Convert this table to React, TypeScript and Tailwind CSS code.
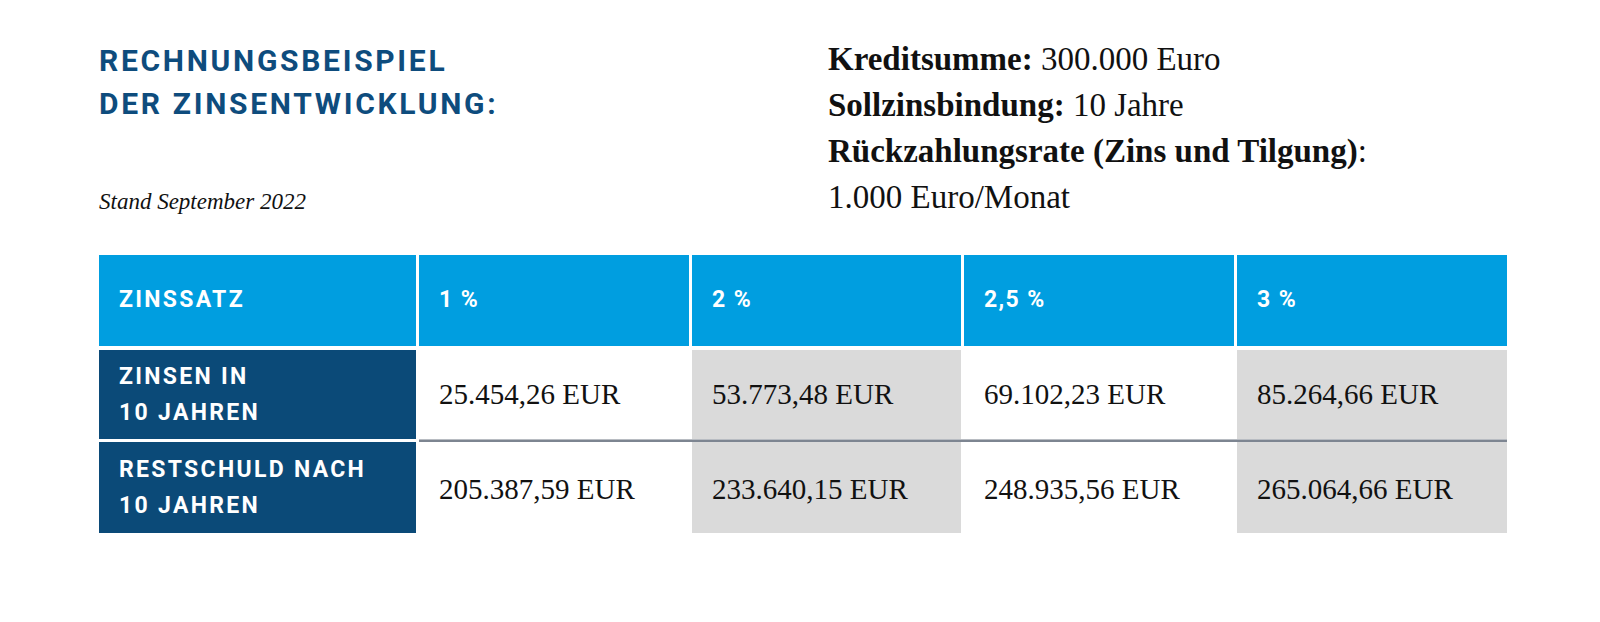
import React from 'react';

const cols = [
  { rate: '1 %', zinsen: '25.454,26 EUR', rest: '205.387,59 EUR', shaded: false },
  { rate: '2 %', zinsen: '53.773,48 EUR', rest: '233.640,15 EUR', shaded: true },
  { rate: '2,5 %', zinsen: '69.102,23 EUR', rest: '248.935,56 EUR', shaded: false },
  { rate: '3 %', zinsen: '85.264,66 EUR', rest: '265.064,66 EUR', shaded: true },
];

const sans = "font-['Roboto',sans-serif] font-bold uppercase";
const serif = "font-['Liberation_Serif',serif]";

export default function App() {
  return (
    <div className="w-[1600px] h-[622px] bg-white text-[#111]">
      <div className="pl-[99px] pt-[36px]">
        {/* Kopfbereich */}
        <div className="flex">
          <div className="w-[729px] flex flex-col">
            <h1 className={`${sans} mt-[3px] text-[30px] leading-[43px] tracking-[0.09em] text-[#0e4c7d]`}>
              Rechnungsbeispiel
              <br />
              der Zinsentwicklung:
            </h1>
            <p className={`${serif} italic mt-[62px] text-[23px] leading-[30px]`}>Stand September 2022</p>
          </div>
          <div className={`${serif} text-[33px] leading-[46px]`}>
            <p>
              <span className="font-bold">Kreditsumme:</span> 300.000 Euro
            </p>
            <p>
              <span className="font-bold">Sollzinsbindung:</span> 10 Jahre
            </p>
            <p>
              <span className="font-bold">Rückzahlungsrate (Zins und Tilgung)</span>:
            </p>
            <p>1.000 Euro/Monat</p>
          </div>
        </div>

        {/* Tabelle */}
        <div className="mt-[35px] w-[1408px] grid grid-cols-[317px_270px_269px_270px_270px] gap-x-[3px]">
          <div className={`${sans} h-[91px] bg-[#009ee0] text-white text-[23px] tracking-[0.1em] flex items-center pl-[20px]`}>
            Zinssatz
          </div>
          {cols.map((c) => (
            <div
              key={c.rate}
              className={`${sans} h-[91px] bg-[#009ee0] text-white text-[23px] tracking-[0.06em] flex items-center pl-[20px]`}
            >
              {c.rate}
            </div>
          ))}

          <div className="col-span-5 h-[4px]" />

          <div className={`${sans} h-[89px] bg-[#0b4a78] text-white text-[23px] leading-[36px] tracking-[0.1em] flex items-center pl-[20px]`}>
            <span>
              Zinsen in
              <br />
              10 Jahren
            </span>
          </div>
          {cols.map((c) => (
            <div
              key={c.zinsen}
              className={`${serif} h-[89px] ${c.shaded ? 'bg-[#dadada]' : 'bg-white'} text-[29px] flex items-center pl-[20px]`}
            >
              {c.zinsen}
            </div>
          ))}

          <div className="h-[3px]" />
          <div className="col-span-4 h-[3px] flex flex-col">
            <div className="h-[1px] bg-[#b8bcc2]" />
            <div className="h-[2px] bg-[#7d8591]" />
          </div>

          <div className={`${sans} h-[91px] bg-[#0b4a78] text-white text-[23px] leading-[36px] tracking-[0.1em] flex items-center pl-[20px]`}>
            <span>
              Restschuld nach
              <br />
              10 Jahren
            </span>
          </div>
          {cols.map((c) => (
            <div
              key={c.rest}
              className={`${serif} h-[91px] ${c.shaded ? 'bg-[#dadada]' : 'bg-white'} text-[29px] flex items-center pl-[20px] pt-[4px]`}
            >
              {c.rest}
            </div>
          ))}
        </div>
      </div>
    </div>
  );
}
